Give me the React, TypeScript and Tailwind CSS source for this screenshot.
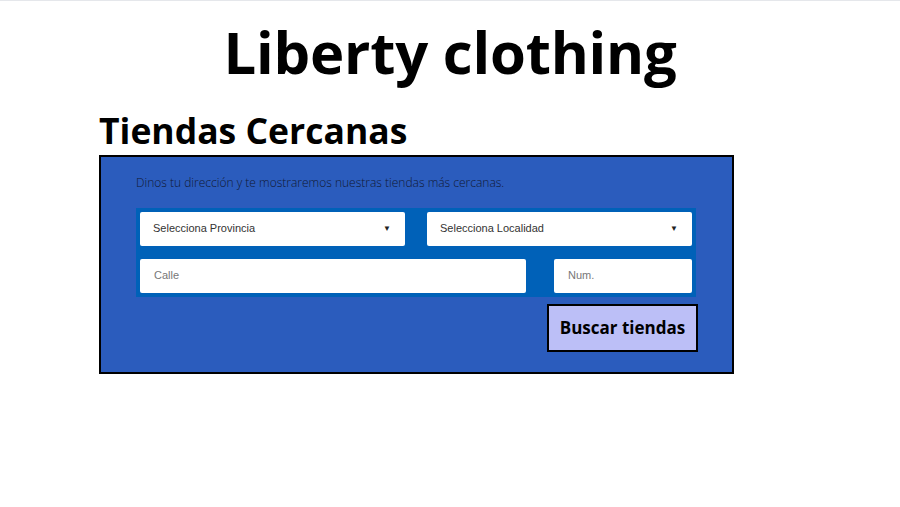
import React from "react";

export default function App() {
  return (
    <div className="w-[900px] h-[507px] bg-white border-t border-[#e5e7eb] overflow-hidden" style={{ fontFamily: "'Open Sans', sans-serif" }}>
      <h1 className="text-center font-bold text-[58px] leading-none mt-[22px] text-black tracking-[-0.2px]">
        Liberty clothing
      </h1>
      <div className="ml-[99px] w-[635px]">
        <h2 className="font-bold text-[35.5px] leading-none mt-[32px] mb-[6px] text-black">Tiendas Cercanas</h2>
        <div className="bg-[#2b5cbd] border-2 border-black pl-[35px] pt-[18px] pb-[20px] pr-[35px]">
          <p className="text-[12px] font-light text-[#111933] leading-4 mb-[17px]">
            Dinos tu dirección y te mostraremos nuestras tiendas más cercanas.
          </p>
          <div className="bg-[#0061b8] p-[4px] w-[560px] flex flex-col gap-[13px]" style={{ fontFamily: "'Liberation Sans', Arial, sans-serif" }}>
            <div className="flex gap-[22px]">
              <div className="w-[265px] h-[34px] bg-white rounded-[2px] flex items-center justify-between pl-[13px] pr-[14px] text-[11px] text-[#333]">
                <span>Selecciona Provincia</span>
                <span className="text-[8px] text-[#222]">▼</span>
              </div>
              <div className="w-[265px] h-[34px] bg-white rounded-[2px] flex items-center justify-between pl-[13px] pr-[14px] text-[11px] text-[#333]">
                <span>Selecciona Localidad</span>
                <span className="text-[8px] text-[#222]">▼</span>
              </div>
            </div>
            <div className="flex gap-[28px]">
              <div className="w-[386px] h-[34px] bg-white rounded-[2px] flex items-center pl-[14px] text-[11px] text-[#777]">Calle</div>
              <div className="w-[138px] h-[34px] bg-white rounded-[2px] flex items-center pl-[14px] text-[11px] text-[#777]">Num.</div>
            </div>
          </div>
          <div className="flex w-[562px] justify-end mt-[7px]">
            <button className="w-[151px] h-[48px] bg-[#bcbff7] border-2 border-black font-bold text-[17px] text-black">
              Buscar tiendas
            </button>
          </div>
        </div>
      </div>
    </div>
  );
}
